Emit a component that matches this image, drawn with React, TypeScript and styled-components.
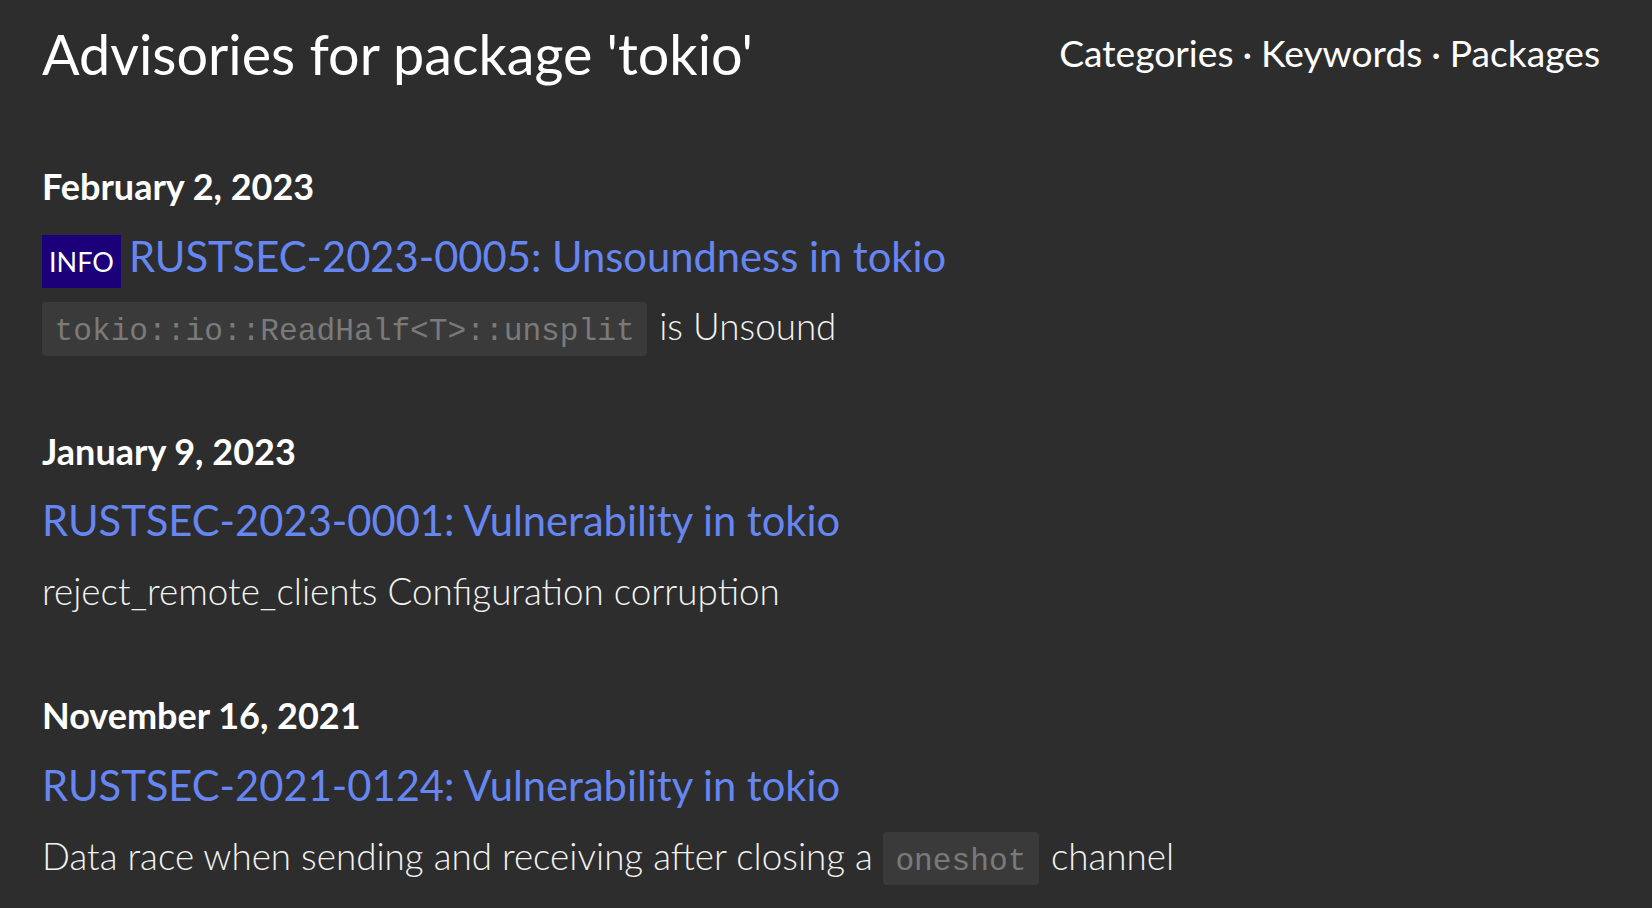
import React from "react";
import styled, { createGlobalStyle } from "styled-components";

const GlobalStyle = createGlobalStyle`
  html, body {
    margin: 0;
    background: #2d2d2d;
  }
  body {
    color: #f2f2f2;
    font-family: Lato, "Noto Sans", sans-serif;
  }
`;

const Page = styled.div`
  padding: 21px 52px 40px 42px;
`;

const Header = styled.header`
  display: flex;
  justify-content: space-between;
  align-items: flex-start;
`;

const Title = styled.h1`
  margin: 0;
  font-size: 55.7px;
  line-height: 66px;
  font-weight: 400;
  color: #ffffff;
`;

const Nav = styled.nav`
  margin-top: 10px;
  font-size: 37.2px;
  line-height: 44px;
  color: #ffffff;
`;

const NavLink = styled.a`
  color: #ffffff;
  text-decoration: none;
`;

const Sep = styled.span`
  padding: 0 0.24em;
`;

const List = styled.main`
  display: flex;
  flex-direction: column;
  gap: 76.2px;
  margin-top: 78px;
`;

const Section = styled.section`
  display: flex;
  flex-direction: column;
`;

const DateHeading = styled.h3`
  margin: 0;
  font-size: 36px;
  line-height: 42px;
  font-weight: 700;
  color: #ffffff;
`;

const AdvisoryTitle = styled.h2`
  margin: 23.7px 0 0;
  font-size: 41.7px;
  line-height: 50px;
  font-weight: 400;
`;

const Badge = styled.span`
  background: #1b0079;
  color: #ffffff;
  font-size: 27px;
  line-height: 1;
  padding: 10px 7px 10px;
  margin-right: 8px;
`;

const AdvisoryLink = styled.a`
  color: #6686f2;
  text-decoration: none;
`;

const Description = styled.p`
  margin: 18.7px 0 0;
  font-size: 36.8px;
  line-height: 54px;
  font-weight: 300;
  color: #f2f2f2;
`;

const Code = styled.code`
  font-family: "Liberation Mono", "DejaVu Sans Mono", monospace;
  font-size: 31.2px;
  line-height: 1;
  color: #7a7a7a;
  background: #3a3a3a;
  border-radius: 4px;
  padding: 12px 12.5px 6.6px;
  margin-right: 2px;
`;

type Advisory = {
  date: string;
  id: string;
  title: string;
  badge?: string;
  description: React.ReactNode;
};

const advisories: Advisory[] = [
  {
    date: "February 2, 2023",
    id: "RUSTSEC-2023-0005",
    title: "Unsoundness in tokio",
    badge: "INFO",
    description: (
      <>
        <Code>tokio::io::ReadHalf&lt;T&gt;::unsplit</Code> is Unsound
      </>
    ),
  },
  {
    date: "January 9, 2023",
    id: "RUSTSEC-2023-0001",
    title: "Vulnerability in tokio",
    description: "reject_remote_clients Configuration corruption",
  },
  {
    date: "November 16, 2021",
    id: "RUSTSEC-2021-0124",
    title: "Vulnerability in tokio",
    description: (
      <>
        Data race when sending and receiving after closing a <Code>oneshot</Code> channel
      </>
    ),
  },
];

export default function App() {
  return (
    <>
      <GlobalStyle />
      <Page>
        <Header>
          <Title>Advisories for package 'tokio'</Title>
          <Nav>
            <NavLink href="#">Categories</NavLink>
            <Sep>·</Sep>
            <NavLink href="#">Keywords</NavLink>
            <Sep>·</Sep>
            <NavLink href="#">Packages</NavLink>
          </Nav>
        </Header>
        <List>
          {advisories.map((a) => (
            <Section key={a.id}>
              <DateHeading>{a.date}</DateHeading>
              <AdvisoryTitle>
                {a.badge && <Badge>{a.badge}</Badge>}
                <AdvisoryLink href="#">
                  {a.id}: {a.title}
                </AdvisoryLink>
              </AdvisoryTitle>
              <Description>{a.description}</Description>
            </Section>
          ))}
        </List>
      </Page>
    </>
  );
}
